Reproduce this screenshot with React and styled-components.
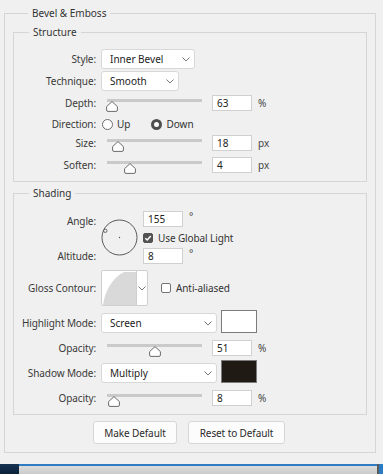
import React from "react";
import styled, { createGlobalStyle } from "styled-components";

const Global = createGlobalStyle`
  html, body { margin: 0; padding: 0; background: #f0f0f0; }
  body {
    width: 383px; height: 474px; overflow: hidden;
    font-family: "Noto Sans", "Open Sans", sans-serif;
    font-size: 10px; color: #333;
  }
  * { box-sizing: border-box; }
`;

const Screen = styled.div`
  display: flex;
  flex-direction: column;
  width: 383px;
  height: 474px;
`;

const Dialog = styled.div`
  flex: 1;
  padding: 5px 7px 0 4px;
`;

const Group = styled.fieldset`
  margin: ${(p) => p.$margin || "0"};
  padding: ${(p) => p.$padding || "0"};
  border: 1px solid #d5d5d5;
  min-inline-size: 0;
`;

const Legend = styled.legend`
  margin-left: 15px;
  padding: 0 4px;
  height: 16px;
  line-height: 16px;
  font-size: 10px;
  color: #333;
`;

const Row = styled.div`
  display: grid;
  grid-template-columns: 82px 1fr;
  column-gap: 5px;
  align-items: ${(p) => p.$align || "center"};
  height: ${(p) => p.$h}px;
  margin-top: ${(p) => p.$mt || 0}px;
`;

const Label = styled.div`
  text-align: right;
  line-height: 20px;
  white-space: nowrap;
  color: #3a3a3a;
  letter-spacing: -0.1px;
`;

const Controls = styled.div`
  display: flex;
  align-items: ${(p) => p.$align || "center"};
  height: 100%;
`;

const SelectBox = styled.div`
  width: ${(p) => p.$w}px;
  height: 20px;
  background: #fff;
  border: 1px solid #d8d8d8;
  border-radius: 3px;
  display: flex;
  align-items: center;
  justify-content: space-between;
  padding: 0 4px 0 8px;
  color: #222;
  white-space: nowrap;
`;

const Chevron = () => (
  <svg width="8" height="5" viewBox="0 0 8 5">
    <path d="M0.5 0.5 L4 4 L7.5 0.5" fill="none" stroke="#777" strokeWidth="1" />
  </svg>
);

const Select = ({ w, children }) => (
  <SelectBox $w={w}>
    <span>{children}</span>
    <Chevron />
  </SelectBox>
);

const Field = styled.div`
  width: 40px;
  height: 16px;
  background: #fff;
  border: 1px solid #d0d0d0;
  padding-left: 4px;
  line-height: 14px;
  color: #222;
  flex: none;
`;

const Unit = styled.span`
  margin-left: ${(p) => p.$ml || 6}px;
  color: #444;
  align-self: ${(p) => p.$self || "center"};
  line-height: ${(p) => (p.$self ? "10px" : "normal")};
`;

const SliderWrap = styled.div`
  position: relative;
  width: 95px;
  height: 16px;
  margin: 0 10px 0 6px;
  flex: none;
`;

const Track = styled.div`
  margin-top: 4px;
  height: 3px;
  background: #cacaca;
`;

const ThumbSvg = styled.svg`
  position: absolute;
  top: 6px;
`;

const Slider = ({ frac }) => (
  <SliderWrap>
    <Track />
    <ThumbSvg width="12" height="11" viewBox="0 0 12 11" style={{ left: Math.round(frac * 95 - 6) }}>
      <path
        d="M6 0.6 L11.4 5.6 L11.4 9 Q11.4 10.4 10 10.4 L2 10.4 Q0.6 10.4 0.6 9 L0.6 5.6 Z"
        fill="#fff"
        stroke="#6a6a6a"
        strokeWidth="1"
      />
    </ThumbSvg>
  </SliderWrap>
);

const SliderRow = ({ label, frac, value, unit, mt }) => (
  <Row $h={16} $mt={mt}>
    <Label>{label}</Label>
    <Controls>
      <Slider frac={frac} />
      <Field>{value}</Field>
      <Unit>{unit}</Unit>
    </Controls>
  </Row>
);

const RadioOption = styled.div`
  display: flex;
  align-items: center;
  gap: 4px;
  margin-left: ${(p) => p.$ml || 0}px;
`;

const RadioDot = styled.span`
  width: 11px;
  height: 11px;
  border-radius: 50%;
  background: #fff;
  border: ${(p) => (p.$on ? "3.5px solid #4f4f4f" : "1px solid #6d6d6d")};
  flex: none;
`;

const CheckRow = styled.div`
  display: flex;
  align-items: center;
  gap: 5px;
  margin-left: ${(p) => p.$ml || 0}px;
  white-space: nowrap;
  letter-spacing: -0.1px;
`;

const CheckBox = styled.span`
  width: 10px;
  height: 10px;
  border-radius: 2px;
  flex: none;
  display: flex;
  align-items: center;
  justify-content: center;
  background: ${(p) => (p.$on ? "#525252" : "#fff")};
  border: 1px solid ${(p) => (p.$on ? "#525252" : "#737373")};
`;

const Check = ({ on }) => (
  <CheckBox $on={on}>
    {on && (
      <svg width="8" height="8" viewBox="0 0 8 8">
        <path d="M1.3 4.2 L3.2 6 L6.8 2" fill="none" stroke="#fff" strokeWidth="1.5" />
      </svg>
    )}
  </CheckBox>
);

const AngleBlock = styled.div`
  display: grid;
  grid-template-columns: 82px 37px auto;
  grid-template-rows: 16px 21px 16px;
  column-gap: 5px;
  margin-top: 10px;
`;

const AngleLabel = styled(Label)`
  grid-column: 1;
  grid-row: ${(p) => p.$row};
  margin-top: ${(p) => p.$dy || 0}px;
  line-height: 16px;
`;

const DialSvg = styled.svg`
  grid-column: 2;
  grid-row: 1 / 4;
  align-self: center;
`;

const FieldLine = styled.div`
  grid-column: 3;
  grid-row: ${(p) => p.$row};
  display: flex;
  align-items: ${(p) => p.$align || "flex-start"};
`;

const ContourBox = styled.div`
  width: 47px;
  height: 36px;
  background: #fff;
  border: 1px solid #cfcfcf;
  border-radius: 2px;
  display: flex;
  flex: none;
`;

const ContourPreview = styled.div`
  width: 35px;
  height: 100%;
  border-right: 1px solid #cfcfcf;
`;

const ContourDrop = styled.div`
  flex: 1;
  display: flex;
  align-items: center;
  justify-content: center;
`;

const Swatch = styled.div`
  width: 36px;
  height: 23px;
  margin-left: 4px;
  border: 1px solid #7b7b7b;
  background: ${(p) => p.$color};
  flex: none;
`;

const ButtonBar = styled.div`
  display: flex;
  gap: 11px;
  margin-top: 6px;
  padding-left: 80px;
`;

const Button = styled.div`
  width: ${(p) => p.$w}px;
  height: 23px;
  background: #fcfcfc;
  border: 1px solid #d6d6d6;
  border-radius: 3px;
  display: flex;
  align-items: center;
  justify-content: center;
  color: #2a2a2a;
  letter-spacing: -0.1px;
`;

const Taskbar = styled.div`
  height: 10px;
  display: flex;
`;

const TaskStart = styled.div`
  width: 19px;
  background: linear-gradient(#163352, #0b2038);
`;

const TaskMiddle = styled.div`
  flex: 1;
  border-top: 2px solid #2f7cc3;
  background: linear-gradient(#dcdcdc, #cbcbcb);
`;

const TaskEdge = styled.div`
  width: 6px;
  border-left: 2px solid #5b5b5b;
  background: #2b7ac4;
`;

export default function App() {
  return (
    <Screen>
      <Global />
      <Dialog>
        <Group $padding="0 8px 8px 8px">
          <Legend>Bevel &amp; Emboss</Legend>

          <Group $margin="3px 0 0 0" $padding="9px 0 10px 0">
            <Legend>Structure</Legend>
            <Row $h={20}>
              <Label>Style:</Label>
              <Controls>
                <Select w={94}>Inner Bevel</Select>
              </Controls>
            </Row>
            <Row $h={20} $mt={2}>
              <Label>Technique:</Label>
              <Controls>
                <Select w={78}>Smooth</Select>
              </Controls>
            </Row>
            <SliderRow label="Depth:" frac={0.055} value="63" unit="%" mt={2} />
            <Row $h={16} $mt={5}>
              <Label>Direction:</Label>
              <Controls>
                <RadioOption $ml={1}>
                  <RadioDot />
                  <span>Up</span>
                </RadioOption>
                <RadioOption $ml={21}>
                  <RadioDot $on />
                  <span>Down</span>
                </RadioOption>
              </Controls>
            </Row>
            <SliderRow label="Size:" frac={0.12} value="18" unit="px" mt={3} />
            <SliderRow label="Soften:" frac={0.245} value="4" unit="px" mt={6} />
          </Group>

          <Group $margin="3px 0 0 0" $padding="0 0 10px 0">
            <Legend>Shading</Legend>
            <AngleBlock>
              <AngleLabel $row={1} $dy={2}>Angle:</AngleLabel>
              <AngleLabel $row={3}>Altitude:</AngleLabel>
              <DialSvg width="37" height="37" viewBox="0 0 37 37">
                <circle cx="18.5" cy="18.5" r="17.5" fill="none" stroke="#5a5a5a" strokeWidth="1" />
                <circle cx="18.5" cy="18.5" r="0.7" fill="#555" />
                <circle cx="4.3" cy="11.8" r="1.7" fill="none" stroke="#5a5a5a" strokeWidth="0.9" />
              </DialSvg>
              <FieldLine $row={1}>
                <Field>155</Field>
                <Unit $ml={6} $self="flex-start">°</Unit>
              </FieldLine>
              <FieldLine $row={2} $align="center">
                <CheckRow>
                  <Check on />
                  <span>Use Global Light</span>
                </CheckRow>
              </FieldLine>
              <FieldLine $row={3}>
                <Field>8</Field>
                <Unit $ml={6} $self="flex-start">°</Unit>
              </FieldLine>
            </AngleBlock>

            <Row $h={36} $mt={6}>
              <Label>Gloss Contour:</Label>
              <Controls>
                <ContourBox>
                  <ContourPreview>
                    <svg width="34" height="34" viewBox="0 0 34 34">
                      <path d="M1 34 C3 20, 10 7, 22 1 L34 1 L34 34 Z" fill="#d9d9d9" />
                    </svg>
                  </ContourPreview>
                  <ContourDrop>
                    <Chevron />
                  </ContourDrop>
                </ContourBox>
                <CheckRow $ml={13}>
                  <Check />
                  <span>Anti-aliased</span>
                </CheckRow>
              </Controls>
            </Row>

            <Row $h={23} $mt={4} $align="end">
              <Label>Highlight Mode:</Label>
              <Controls $align="flex-end">
                <Select w={116}>Screen</Select>
                <Swatch $color="#ffffff" />
              </Controls>
            </Row>
            <SliderRow label="Opacity:" frac={0.51} value="51" unit="%" mt={5} />
            <Row $h={23} $mt={6} $align="end">
              <Label>Shadow Mode:</Label>
              <Controls $align="flex-end">
                <Select w={116}>Multiply</Select>
                <Swatch $color="#1f1a13" />
              </Controls>
            </Row>
            <SliderRow label="Opacity:" frac={0.075} value="8" unit="%" mt={5} />
          </Group>

          <ButtonBar>
            <Button $w={84}>Make Default</Button>
            <Button $w={97}>Reset to Default</Button>
          </ButtonBar>
        </Group>
      </Dialog>
      <Taskbar>
        <TaskStart />
        <TaskMiddle />
        <TaskEdge />
      </Taskbar>
    </Screen>
  );
}
